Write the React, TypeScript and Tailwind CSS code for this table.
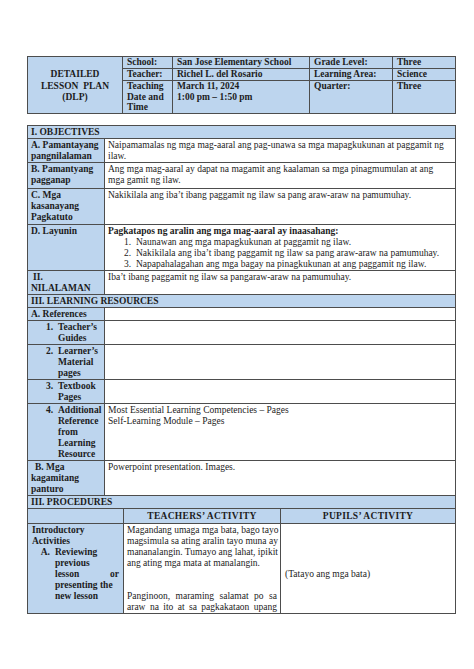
import React from "react";

const BL = "bg-[#bdd5ee]";
const bd = "border border-[#4d4d4d]";

function J({ children, last }: { children: React.ReactNode; last?: boolean }) {
  return (
    <div className={last ? "whitespace-nowrap" : "text-justify [text-align-last:justify] whitespace-nowrap"}>
      {children}
    </div>
  );
}

function NumItem({ n, lines }: { n: string; lines: string[] }) {
  return (
    <div className="flex whitespace-nowrap">
      <div className="w-[22px] text-right shrink-0">{n}</div>
      <div className="pl-[5px]">
        {lines.map((l, i) => (
          <div key={i}>{l}</div>
        ))}
      </div>
    </div>
  );
}

export default function App() {
  return (
    <div
      className="w-[474px] h-[669px] bg-white text-[#1c1c1c] text-[9.5px] leading-[11px] pt-[56px] pl-[27px]"
      style={{ fontFamily: '"Liberation Serif", "Times New Roman", serif' }}
    >
      {/* Header table */}
      <table className={`table-fixed border-collapse w-[428px] ${BL} font-bold`}>
        <colgroup>
          <col className="w-[95px]" />
          <col className="w-[50px]" />
          <col className="w-[137px]" />
          <col className="w-[83px]" />
          <col className="w-[63px]" />
        </colgroup>
        <tbody>
          <tr className="h-[12px]">
            <td rowSpan={3} className={`${bd} text-center align-middle pt-[3px] leading-[11.5px]`}>
              <div>DETAILED</div>
              <div className="whitespace-pre">LESSON  PLAN</div>
              <div>(DLP)</div>
            </td>
            <td className={`${bd} px-[4px] align-top whitespace-nowrap`}>School:</td>
            <td className={`${bd} px-[4px] align-top whitespace-nowrap`}>San Jose Elementary School</td>
            <td className={`${bd} px-[4px] align-top whitespace-nowrap`}>Grade Level:</td>
            <td className={`${bd} px-[4px] align-top`}>Three</td>
          </tr>
          <tr className="h-[11px]">
            <td className={`${bd} px-[4px] align-top whitespace-nowrap`}>Teacher:</td>
            <td className={`${bd} px-[4px] align-top whitespace-nowrap`}>Richel L. del Rosario</td>
            <td className={`${bd} px-[4px] align-top whitespace-nowrap`}>Learning Area:</td>
            <td className={`${bd} px-[4px] align-top`}>Science</td>
          </tr>
          <tr className="h-[32px] leading-[10.5px]">
            <td className={`${bd} px-[4px] align-top`}>
              <div>Teaching</div>
              <div>Date and</div>
              <div>Time</div>
            </td>
            <td className={`${bd} px-[4px] align-top whitespace-nowrap`}>
              <div>March 11, 2024</div>
              <div>1:00 pm – 1:50 pm</div>
            </td>
            <td className={`${bd} px-[4px] align-top`}>Quarter:</td>
            <td className={`${bd} px-[4px] align-top`}>Three</td>
          </tr>
        </tbody>
      </table>

      <div className="h-[11px]" />

      {/* Main table */}
      <table className="table-fixed border-collapse w-[428px]">
        <colgroup>
          <col className="w-[77px]" />
          <col className="w-[351px]" />
        </colgroup>
        <tbody>
          <tr className="h-[13px]">
            <td colSpan={2} className={`${bd} ${BL} font-bold px-[3px] align-top pt-[1px]`}>I. OBJECTIVES</td>
          </tr>
          <tr className="h-[24px]">
            <td className={`${bd} ${BL} font-bold px-[3px] align-top pt-[1px] whitespace-nowrap`}>
              <div>A. Pamantayang</div>
              <div>pangnilalaman</div>
            </td>
            <td className={`${bd} px-[3px] align-top pt-[1px]`}>
              <div className="whitespace-nowrap">Naipamamalas ng mga mag-aaral ang pag-unawa sa mga mapagkukunan at paggamit ng</div>
              <div>ilaw.</div>
            </td>
          </tr>
          <tr className="h-[26px]">
            <td className={`${bd} ${BL} font-bold px-[3px] align-top pt-[1px] whitespace-nowrap`}>
              <div>B. Pamantyang</div>
              <div>pagganap</div>
            </td>
            <td className={`${bd} px-[3px] align-top pt-[1px]`}>
              <div className="whitespace-nowrap">Ang mga mag-aaral ay dapat na magamit ang kaalaman sa mga pinagmumulan at ang</div>
              <div>mga gamit ng ilaw.</div>
            </td>
          </tr>
          <tr className="h-[36px]">
            <td className={`${bd} ${BL} font-bold px-[3px] align-top pt-[1px] whitespace-nowrap`}>
              <div>C. Mga</div>
              <div>kasanayang</div>
              <div>Pagkatuto</div>
            </td>
            <td className={`${bd} px-[3px] align-top pt-[1px]`}>
              Nakikilala ang iba’t ibang paggamit ng ilaw sa pang araw-araw na pamumuhay.
            </td>
          </tr>
          <tr className="h-[46px]">
            <td className={`${bd} ${BL} font-bold px-[3px] align-top pt-[1px]`}>D. Layunin</td>
            <td className={`${bd} px-[3px] align-top pt-[1px]`}>
              <div className="font-bold">Pagkatapos ng aralin ang mga mag-aaral ay inaasahang:</div>
              <div className="whitespace-nowrap pl-[1px]">
                <NumItem n="1." lines={["Naunawan ang mga mapagkukunan at paggamit ng ilaw."]} />
                <NumItem n="2." lines={["Nakikilala ang iba’t ibang paggamit ng ilaw sa pang araw-araw na pamumuhay."]} />
                <NumItem n="3." lines={["Napapahalagahan ang mga bagay na pinagkukunan at ang paggamit ng ilaw."]} />
              </div>
            </td>
          </tr>
          <tr className="h-[23px]">
            <td className={`${bd} ${BL} font-bold px-[3px] align-top pt-[1px]`}>
              <div className="pl-[2px]">II.</div>
              <div>NILALAMAN</div>
            </td>
            <td className={`${bd} px-[3px] align-top pt-[1px]`}>
              Iba’t ibang paggamit ng ilaw sa pangaraw-araw na pamumuhay.
            </td>
          </tr>
          <tr className="h-[13px]">
            <td colSpan={2} className={`${bd} ${BL} font-bold px-[3px] align-top pt-[1px]`}>III. LEARNING RESOURCES</td>
          </tr>
          <tr className="h-[13px]">
            <td className={`${bd} ${BL} font-bold px-[3px] align-top pt-[1px] whitespace-nowrap`}>A. References</td>
            <td className={`${bd}`}></td>
          </tr>
          <tr className="h-[24px]">
            <td className={`${bd} ${BL} font-bold px-[3px] align-top pt-[1px]`}>
              <NumItem n="1." lines={["Teacher’s", "Guides"]} />
            </td>
            <td className={`${bd}`}></td>
          </tr>
          <tr className="h-[35px]">
            <td className={`${bd} ${BL} font-bold px-[3px] align-top pt-[1px]`}>
              <NumItem n="2." lines={["Learner’s", "Material", "pages"]} />
            </td>
            <td className={`${bd}`}></td>
          </tr>
          <tr className="h-[24px]">
            <td className={`${bd} ${BL} font-bold px-[3px] align-top pt-[1px]`}>
              <NumItem n="3." lines={["Textbook", "Pages"]} />
            </td>
            <td className={`${bd}`}></td>
          </tr>
          <tr className="h-[56px]">
            <td className={`${bd} ${BL} font-bold px-[3px] align-top pt-[1px]`}>
              <NumItem n="4." lines={["Additional", "Reference", "from", "Learning", "Resource"]} />
            </td>
            <td className={`${bd} px-[3px] align-top pt-[1px]`}>
              <div>Most Essential Learning Competencies – Pages</div>
              <div>Self-Learning Module – Pages</div>
            </td>
          </tr>
          <tr className="h-[35px]">
            <td className={`${bd} ${BL} font-bold px-[3px] align-top pt-[1px] whitespace-nowrap`}>
              <div className="pl-[4px]">B. Mga</div>
              <div>kagamitang</div>
              <div>panturo</div>
            </td>
            <td className={`${bd} px-[3px] align-top pt-[1px]`}>Powerpoint presentation. Images.</td>
          </tr>
        </tbody>
      </table>

      {/* Procedures table */}
      <table className="table-fixed border-collapse w-[428px]">
        <colgroup>
          <col className="w-[96px]" />
          <col className="w-[157px]" />
          <col className="w-[175px]" />
        </colgroup>
        <tbody>
          <tr className="h-[13px]">
            <td colSpan={3} className={`${bd} border-t-0 ${BL} font-bold px-[3px] align-top pt-[1px]`}>III. PROCEDURES</td>
          </tr>
          <tr className="h-[15px]">
            <td className={`${bd} ${BL}`}></td>
            <td className={`${bd} ${BL} font-bold text-center align-middle tracking-[0.3px]`}>TEACHERS’ ACTIVITY</td>
            <td className={`${bd} ${BL} font-bold text-center align-middle tracking-[0.3px]`}>PUPILS’ ACTIVITY</td>
          </tr>
          <tr className="h-[88px]">
            <td className={`${bd} ${BL} font-bold pl-[4px] pr-[4px] align-top pt-[1px] whitespace-nowrap`}>
              <div>Introductory</div>
              <div>Activities</div>
              <div className="flex">
                <div className="w-[18px] text-right shrink-0">A.</div>
                <div className="pl-[5px] flex-1">
                  <div>Reviewing</div>
                  <div>previous</div>
                  <div className="flex justify-between">
                    <span>lesson</span>
                    <span>or</span>
                  </div>
                  <div>presenting the</div>
                  <div>new lesson</div>
                </div>
              </div>
            </td>
            <td className={`${bd} px-[3px] align-top pt-[1px]`}>
              <J>Magandang umaga mga bata, bago tayo</J>
              <J>magsimula sa ating aralin tayo muna ay</J>
              <J>mananalangin. Tumayo ang lahat, ipikit</J>
              <J last>ang ating mga mata at manalangin.</J>
              <div className="h-[22px]" />
              <J>Panginoon, maraming salamat po sa</J>
              <J>araw na ito at sa pagkakataon upang</J>
            </td>
            <td className={`${bd} px-[4px] align-top pt-[45px]`}>(Tatayo ang mga bata)</td>
          </tr>
        </tbody>
      </table>
    </div>
  );
}
